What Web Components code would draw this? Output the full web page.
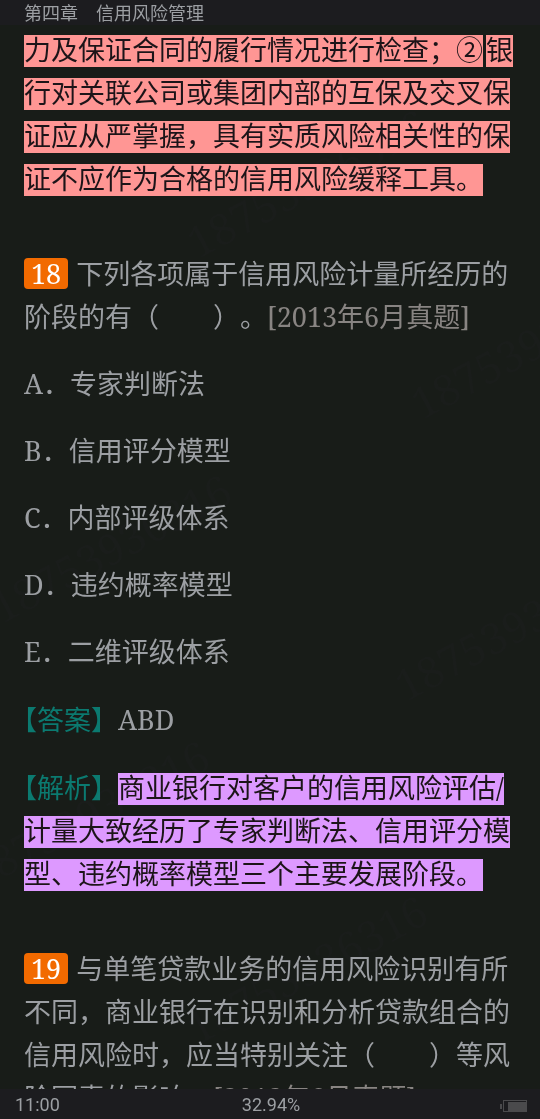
<!DOCTYPE html>
<html lang="zh-CN">
<head>
<meta charset="utf-8">
<meta name="viewport" content="width=device-width, initial-scale=1">
<title>第四章　信用风险管理</title>
<style>
  body {
    margin: 0;
    background: #181c18;
    color: #9c9fa3;
    font-family: "Noto Serif", "Liberation Serif", "Noto Sans CJK SC", serif;
  }
</style>
</head>
<body>
<reader-app>
  <span slot="title">第四章　信用风险管理</span>

  <book-para>
    <high-light color="pink">力及保证合同的履行情况进行检查；②</high-light><high-light color="pink" split>银行对关联公司或集团内部的互保及交叉保证应从严掌握，具有实质风险相关性的保证不应作为合格的信用风险缓释工具。</high-light>
  </book-para>

  <book-para no="18">下列各项属于信用风险计量所经历的阶段的有（　　）。<exam-source year="2013" month="6"></exam-source></book-para>
  <book-para>A．专家判断法</book-para>
  <book-para>B．信用评分模型</book-para>
  <book-para>C．内部评级体系</book-para>
  <book-para>D．违约概率模型</book-para>
  <book-para>E．二维评级体系</book-para>
  <book-para label="答案">ABD</book-para>
  <book-para label="解析"><high-light color="purple">商业银行对客户的信用风险评估/计量大致经历了专家判断法、信用评分模型、违约概率模型三个主要发展阶段。</high-light></book-para>

  <book-para no="19">与单笔贷款业务的信用风险识别有所不同，商业银行在识别和分析贷款组合的信用风险时，应当特别关注（　　）等风险因素的影响。<exam-source year="2013" month="6"></exam-source></book-para>

  <page-watermark slot="overlay" text="18753936316"></page-watermark>
  <status-bar slot="status" time="11:00" progress="32.94%"></status-bar>
</reader-app>

<script>
class ReaderApp extends HTMLElement {
  constructor() {
    super();
    this.attachShadow({ mode: 'open' });
    this.shadowRoot.innerHTML = `
      <style>
        :host {
          display: flex;
          flex-direction: column;
          position: relative;
          height: 100vh;
          overflow: hidden;
        }
        header {
          flex: none;
          padding: 0 24px;
          background: #1c1c1f;
          font: 18px/25px "Noto Sans CJK SC", sans-serif;
        }
        h1 { margin: 0; font: inherit; }
        main {
          flex: 1;
          min-height: 0;
          overflow: hidden;
          padding: 3px 24px 0;
        }
      </style>
      <header><h1><slot name="title"></slot></h1></header>
      <main><slot></slot></main>
      <slot name="status"></slot>
      <slot name="overlay"></slot>
    `;
  }
}
customElements.define('reader-app', ReaderApp);

// One paragraph of the book, with an optional question number or 【label】
class BookPara extends HTMLElement {
  constructor() {
    super();
    this.attachShadow({ mode: 'open' });
    // no white space round the slot, it would show up in the line
    this.shadowRoot.innerHTML = `<style>
        :host {
          display: block;
          margin-bottom: 24px;
          font-size: 27px;
          line-height: 43px;
          text-spacing-trim: space-all;
        }
        :host([no]) { margin-top: 52px; }
        /* hang the empty half of the opening bracket */
        :host([label]) { margin-top: 25px; text-indent: -14px; }
        .no {
          display: inline-block;
          margin-right: 8px;
          padding: 0 7px;
          border-radius: 4px;
          background: #f26a00;
          color: #fff;
          line-height: 31px;
        }
        .label { color: #0b7a70; }
      </style><span id="lead"></span><slot></slot>`;
  }

  connectedCallback() {
    const lead = this.shadowRoot.getElementById('lead');
    if (this.hasAttribute('no')) {
      lead.className = 'no';
      lead.textContent = this.getAttribute('no');
    } else if (this.hasAttribute('label')) {
      lead.className = 'label';
      lead.textContent = `【${this.getAttribute('label')}】`;
    }
  }
}
customElements.define('book-para', BookPara);

class HighLight extends HTMLElement {
  constructor() {
    super();
    this.attachShadow({ mode: 'open' });
    this.shadowRoot.innerHTML = `<style>
        :host {
          --mark: #ff9694;
          display: inline;
          color: #1c1418;
          /* leave the top of the tall line box unpainted */
          background: linear-gradient(transparent 4px, var(--mark) 4px 36px, transparent 36px);
        }
        :host([color="purple"]) { --mark: #dd99ff; }
        :host([split]) { margin-left: 3px; }
      </style><slot></slot>`;
  }
}
customElements.define('high-light', HighLight);

class ExamSource extends HTMLElement {
  constructor() {
    super();
    this.attachShadow({ mode: 'open' });
    this.shadowRoot.innerHTML = `<style>
        :host { display: inline; color: #888482; }
      </style><span id="text"></span>`;
  }

  connectedCallback() {
    this.shadowRoot.getElementById('text').textContent =
      `[${this.getAttribute('year')}年${this.getAttribute('month')}月真题]`;
  }
}
customElements.define('exam-source', ExamSource);

class StatusBar extends HTMLElement {
  constructor() {
    super();
    this.attachShadow({ mode: 'open' });
    this.shadowRoot.innerHTML = `
      <style>
        :host {
          flex: none;
          display: grid;
          grid-template-columns: 1fr auto 1fr;
          align-items: center;
          padding: 2px 13px 0 15px;
          background: #1c1c1f;
          font: 18px/28px Roboto, sans-serif;
        }
        svg { justify-self: end; margin-top: 2px; }
      </style>
      <span id="time"></span>
      <span id="progress"></span>
      <svg width="27" height="12" viewBox="0 0 27 12" aria-hidden="true">
        <rect x="0" y="4" width="2" height="5" fill="#4a4a4c"/>
        <rect x="3.5" y=".5" width="23" height="11" fill="none" stroke="#4a4a4c"/>
        <rect x="8" y="2" width="18" height="9" fill="#4a4a4c"/>
      </svg>
    `;
  }

  connectedCallback() {
    this.shadowRoot.getElementById('time').textContent = this.getAttribute('time');
    this.shadowRoot.getElementById('progress').textContent = this.getAttribute('progress');
  }
}
customElements.define('status-bar', StatusBar);

// Faint account number scattered over the page
class PageWatermark extends HTMLElement {
  constructor() {
    super();
    this.attachShadow({ mode: 'open' });
    this.shadowRoot.innerHTML = `
      <style>
        :host {
          position: absolute;
          inset: 25px 0 30px;
          overflow: hidden;
          pointer-events: none;
        }
        span {
          position: absolute;
          color: rgba(32, 32, 38, 0.3);
          mix-blend-mode: lighten;
          font-size: 43px;
          line-height: 43px;
          transform: rotate(-28deg);
          transform-origin: 0 100%;
        }
      </style>
    `;
  }

  connectedCallback() {
    const spots = [[-226, 411], [200, 196], [424, 357], [4, 561], [408, 639], [-18, 827], [200, 982]];
    for (const [x, y] of spots) {
      const el = document.createElement('span');
      el.textContent = this.getAttribute('text');
      el.style.left = x + 'px';
      el.style.top = y + 'px';
      this.shadowRoot.appendChild(el);
    }
  }
}
customElements.define('page-watermark', PageWatermark);
</script>
</body>
</html>
